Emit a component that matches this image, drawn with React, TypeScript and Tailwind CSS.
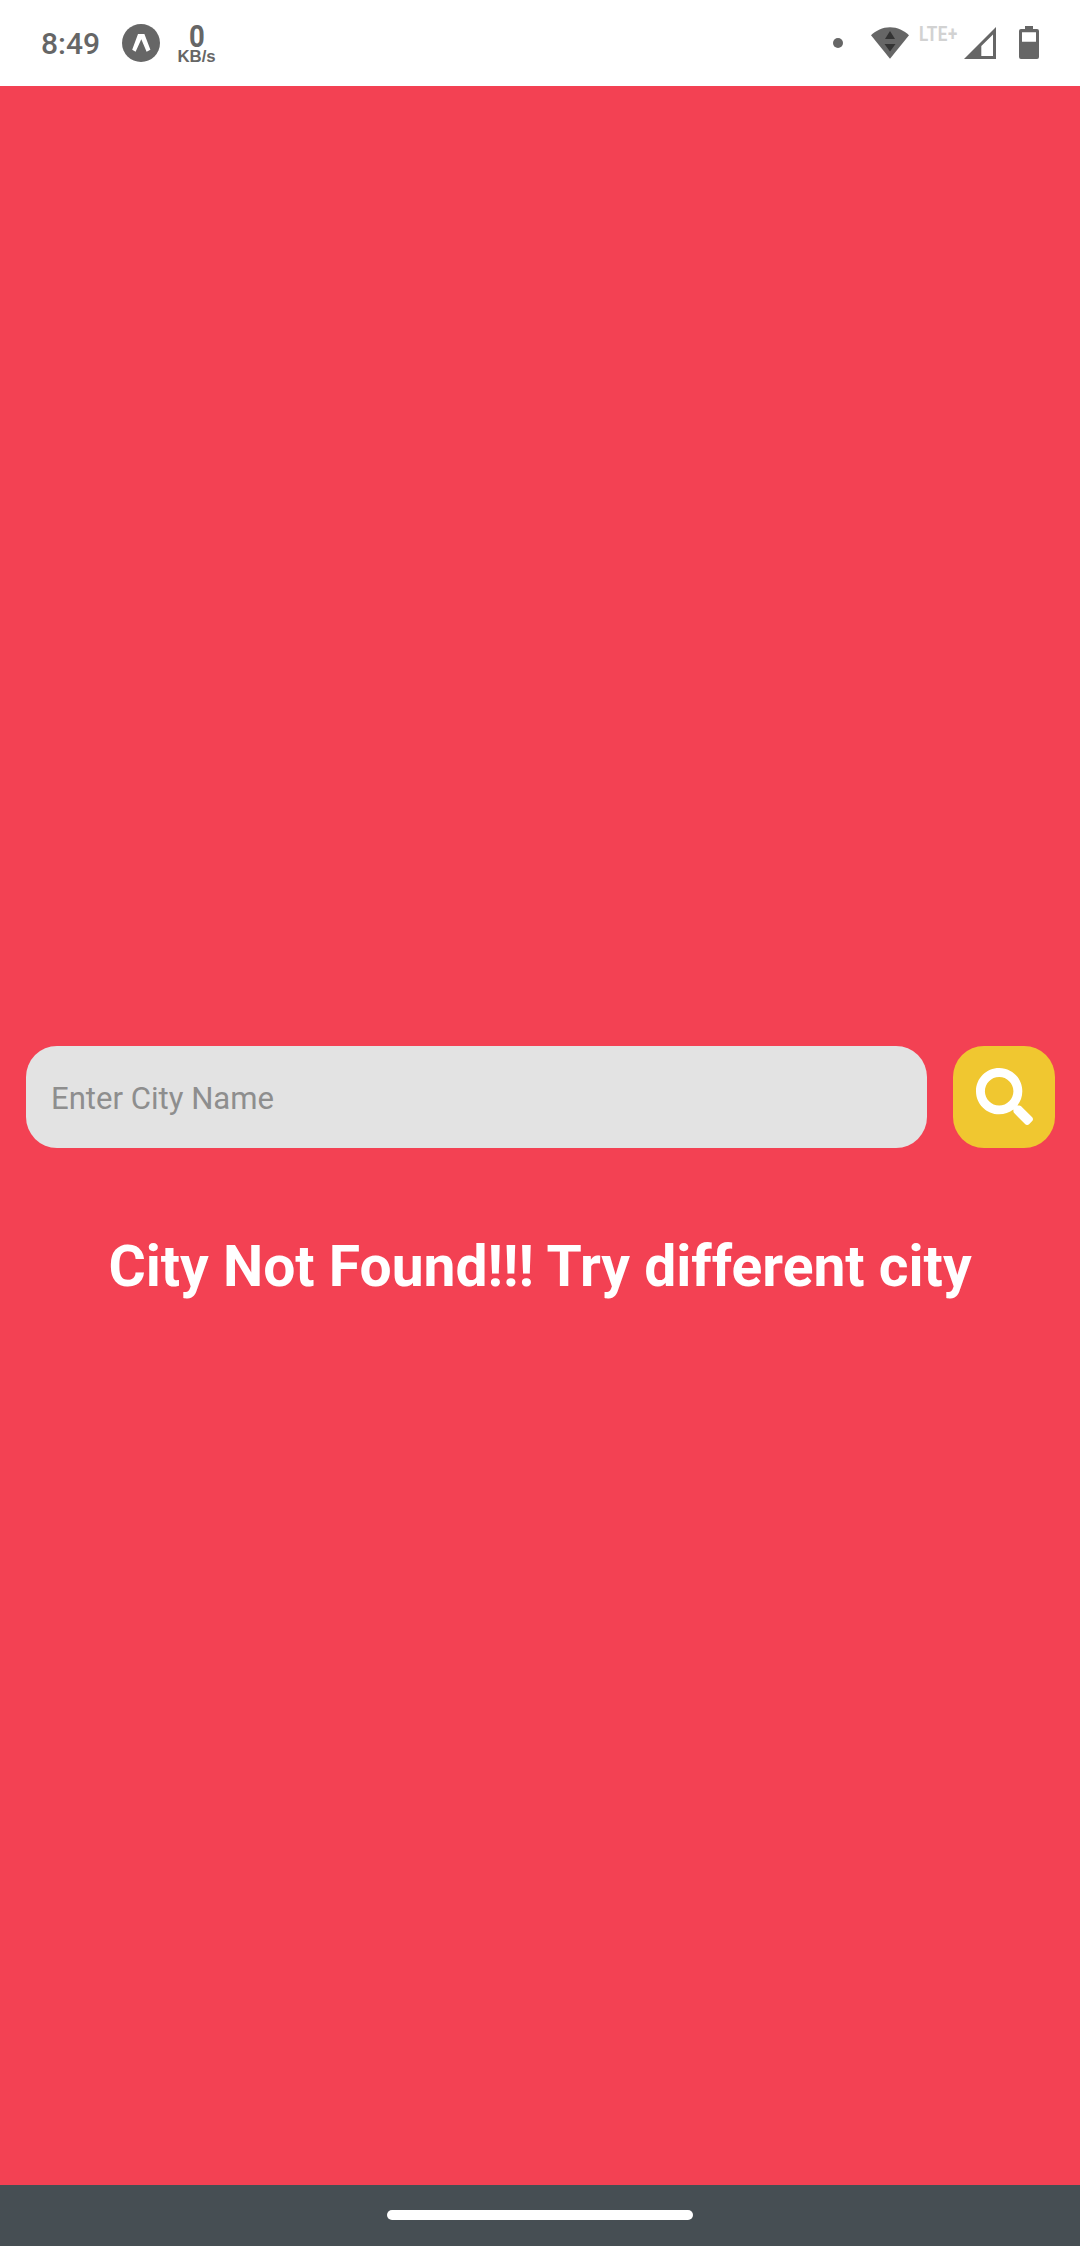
import { FaSearch } from "react-icons/fa";

const ExpoIcon = () => (
  <svg viewBox="0 0 38 38" className="ml-6 h-[38px] w-[38px] shrink-0">
    <circle cx="19" cy="19" r="19" fill="#666666" />
    <path d="M16 10h6.400l6 15.800-3.800 2-5.300-12.600-5.700 12.600-3.400-2z" fill="#fff" />
  </svg>
);

const WifiIcon = () => (
  <svg viewBox="0 0 38 32" className="ml-7 h-8 w-[38px] shrink-0">
    <path d="M0 8.300C5 3.500 11.500.2 19 .2s14 3.300 19 8.100L19 31.700z" fill="#666666" />
    <path d="M19 4l5 8H14zM13.500 17h11L19 24.500z" fill="#333333" />
  </svg>
);

const SignalIcon = () => (
  <svg viewBox="0 0 32 32" className="ml-[6px] h-8 w-8 shrink-0">
    <path d="M32 0v32H0zM29 7.500L17.300 19v10H29z" fill="#666666" fillRule="evenodd" />
  </svg>
);

const BatteryIcon = () => (
  <svg viewBox="0 0 20 33" className="mb-px ml-[23px] h-[33px] w-5 shrink-0">
    <path
      d="M6 0h8v3h4a2 2 0 0 1 2 2v26a2 2 0 0 1-2 2H2a2 2 0 0 1-2-2V5a2 2 0 0 1 2-2h4zM3 6.300v9.400h14V6.300z"
      fill="#666666"
      fillRule="evenodd"
    />
  </svg>
);

const StatusBar = () => (
  <header className="flex h-[86px] shrink-0 items-center justify-between bg-white pr-[41px] pl-[41px] text-[#666666]">
    <div className="flex items-center">
      <span className="w-[57px] pt-px text-[30px] leading-9 font-medium whitespace-nowrap">8:49</span>
      <ExpoIcon />
      <div className="ml-[18px] flex w-[37px] flex-col items-center pt-1">
        <span className="scale-x-90 text-[30.500px] leading-[23px] font-bold">0</span>
        <span className="font-['Liberation_Sans',sans-serif] text-[16.800px] leading-[18px] font-bold whitespace-nowrap">
          KB/s
        </span>
      </div>
    </div>
    <div className="flex items-center">
      <span className="h-[10px] w-[10px] rounded-full bg-[#666666]" />
      <WifiIcon />
      <span className="mb-[18px] ml-[10px] w-[39px] origin-left scale-x-[0.85] text-[20px] leading-5 font-bold tracking-[0.6px] whitespace-nowrap text-[#d2d2d2]">
        LTE+
      </span>
      <SignalIcon />
      <BatteryIcon />
    </div>
  </header>
);

export default function App() {
  return (
    <div className="flex h-[2246px] w-[1080px] flex-col overflow-hidden bg-[#f34153] font-['Roboto',sans-serif]">
      <StatusBar />
      <main className="flex flex-1 flex-col pt-[960px]">
        <form className="flex gap-[26px] pr-[25px] pl-[26px]" onSubmit={(e) => e.preventDefault()}>
          <input
            type="text"
            placeholder="Enter City Name"
            className="h-[102px] w-[901px] rounded-[31px] bg-[#e3e3e3] px-[25px] pt-[2px] text-[31.100px] text-black outline-none placeholder:text-[#8e8e8e]"
          />
          <button
            type="submit"
            aria-label="Search"
            className="flex h-[102px] w-[102px] items-center justify-center rounded-[31px] bg-[#f0c730] pb-px pl-px text-white"
          >
            <FaSearch className="h-[57px] w-[57px]" />
          </button>
        </form>
        <h1 className="mt-[85px] text-center text-[57px] leading-[68px] font-bold whitespace-nowrap text-white">
          City Not Found!!! Try different city
        </h1>
      </main>
      <footer className="flex h-[61px] shrink-0 justify-center bg-[#464e53] pt-[25px]">
        <div className="h-[10px] w-[306px] rounded-full bg-white" />
      </footer>
    </div>
  );
}
